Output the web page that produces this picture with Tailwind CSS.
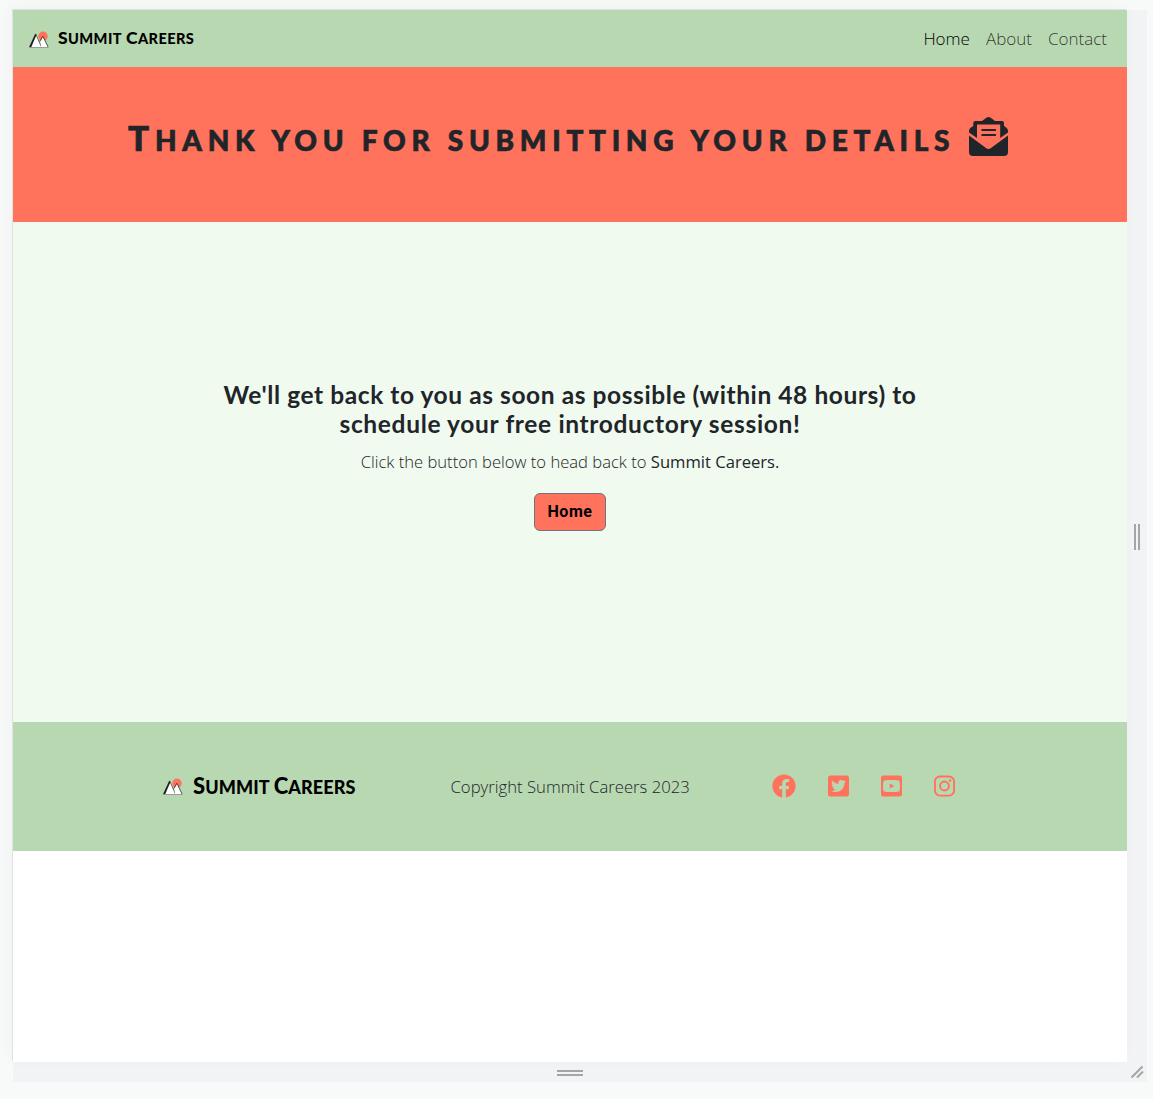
<!DOCTYPE html>
<html lang="en">
<head>
<meta charset="utf-8">
<title>Summit Careers</title>
<script src="https://cdn.jsdelivr.net/npm/@tailwindcss/browser@4"></script>
</head>
<body class="h-[1099px] overflow-hidden bg-[#f8faf9] pt-[10px] pl-[13px] font-['Open_Sans',sans-serif] text-[#212529]">
<svg class="hidden">
  <symbol id="logo" viewBox="0 0 20 18">
    <circle cx="14" cy="5.200" r="4.700" fill="#ff725c"/>
    <path d="M1.500 16 7 3.500 12.500 16z" fill="#fff"/>
    <path d="M0 16.200 6.300 2.500l1.200 1.600L2.200 16.200z" fill="#222"/>
    <path d="m6.700 3 5.500 12.500" stroke="#333" stroke-width=".7"/>
    <path d="m11.500 11 2.500-5 4.700 10h-6.500z" fill="#fff"/>
    <path d="m10.600 10.500 3.300-5.300 5.200 10.800" fill="none" stroke="#333" stroke-width=".8"/>
    <path d="M.5 16.500h19" stroke="#888" stroke-width=".7"/>
  </symbol>
</svg>
<div class="grid h-[1072px] w-[1134px] grid-cols-[1114px_20px] grid-rows-[1052px_20px] bg-[#f1f3f5]">
  <div class="bg-white shadow-[-1px_-1px_0_#dfe2e1,-4px_-4px_16px_rgba(0,0,0,0.03)]">
    <nav class="flex h-[57px] items-center justify-between bg-[#b8d8b2] pr-5 pl-4">
      <a class="flex items-center gap-[9px] text-black">
        <svg class="mt-[2px] h-[18px] w-[20px]"><use href="#logo"/></svg>
        <span class="-mt-px flex gap-[4px] font-['Lato',sans-serif] text-[14.6px] leading-6 font-black tracking-[0.4px] uppercase"><span class="block first-letter:text-[17.5px]">Summit</span><span class="block first-letter:text-[17.5px]">Careers</span></span>
      </a>
      <div class="flex gap-4 text-[17px] leading-6 font-light text-black/75">
        <a class="text-black">Home</a><a>About</a><a>Contact</a>
      </div>
    </nav>
    <header class="flex h-[155px] items-start justify-center bg-[#ff725c] pt-[48px]">
      <h1 class="flex w-[884px] items-start justify-between">
        <span class="-mt-[2px] block font-['Lato',sans-serif] text-[28px] leading-[48px] font-black tracking-[5.72px] whitespace-nowrap uppercase [-webkit-text-stroke:0.7px_#212529] first-letter:text-[35px]">Thank you for submitting your details</span>
        <svg class="mt-[2px] mr-[4px] h-[39px] w-[39px] shrink-0" viewBox="0 0 39 39" fill="#212529"><path d="M0 15.500V14q0-2 1.500-3.200L4.300 9V6q0-2 2-2H13l4-3q2.500-2 5 0l4 3h7q2 0 2 2v3l2.500 1.800Q39 12 39 14v1.500L31.200 21V7.500H8V21z"/><path d="M0 18.500 17 31q2.500 1.800 5 0l17-12.500V35q0 4-4 4H4q-4 0-4-4z"/><path d="M13.200 13h13M13.200 18h13" stroke="#212529" stroke-width="1.900" stroke-linecap="round"/></svg>
      </h1>
    </header>
    <main class="flex h-[500px] flex-col items-center bg-[#f0faef] pt-[158px] text-center">
      <h2 class="font-['Lato',sans-serif] text-[24.5px] leading-[29px] font-bold whitespace-nowrap"><span class="block tracking-[0.58px]">We'll get back to you as soon as possible (within 48 hours) to</span><span class="block tracking-[0.66px]">schedule your free introductory session!</span></h2>
      <p class="mt-[12px] text-[16.6px] leading-6 font-light">Click the button below to head back to <span class="font-normal">Summit Careers.</span></p>
      <a class="mt-[19px] flex h-[38px] w-[72px] items-center justify-center rounded-md border border-[#6c757d] bg-[#ff725c] font-['Roboto',sans-serif] text-[16px] font-bold tracking-[0.6px] text-black">Home</a>
    </main>
    <footer class="flex h-[129px] items-center bg-[#b8d8b2] pl-[150px]">
      <a class="flex w-[287px] items-center gap-[10px] text-black">
        <svg class="h-[18px] w-[20px]"><use href="#logo"/></svg>
        <span class="flex gap-[4px] font-['Lato',sans-serif] text-[18px] leading-6 font-black tracking-[0.1px] uppercase"><span class="block first-letter:text-[22px]">Summit</span><span class="block first-letter:text-[22px]">Careers</span></span>
      </a>
      <p class="w-[322px] pl-[0.5px] text-[16.7px] leading-6 font-light whitespace-nowrap">Copyright Summit Careers 2023</p>
      <div class="-mt-[2px] flex items-center gap-8 text-[#ff725c]">
        <svg class="size-6" viewBox="0 0 512 512" fill="currentColor"><path d="M504 256C504 119 393 8 256 8S8 119 8 256c0 123.78 90.69 226.38 209.25 245V327.69h-63V256h63v-54.64c0-62.15 37-96.48 93.67-96.48 27.14 0 55.52 4.84 55.52 4.84v61h-31.28c-30.8 0-40.41 19.12-40.41 38.73V256h68.78l-11 71.69h-57.78V501C413.31 482.38 504 379.78 504 256z"/></svg>
        <svg class="h-6 w-[21px]" viewBox="0 0 448 512" fill="currentColor"><path d="M400 32H48C21.5 32 0 53.5 0 80v352c0 26.5 21.5 48 48 48h352c26.5 0 48-21.5 48-48V80c0-26.5-21.5-48-48-48zm-48.9 158.8c.2 2.8.2 5.7.2 8.5 0 86.7-66 186.6-186.6 186.6-37.2 0-71.7-10.8-100.7-29.4 5.3.6 10.4.8 15.8.8 30.7 0 58.9-10.4 81.4-28-28.8-.6-53-19.5-61.3-45.5 10.1 1.5 19.2 1.5 29.6-1.2-30-6.1-52.5-32.5-52.5-64.4v-.8c8.7 4.9 18.9 7.9 29.6 8.3a65.447 65.447 0 0 1-29.2-54.6c0-12.2 3.2-23.4 8.9-33.1 32.3 39.8 80.8 65.8 135.2 68.6-9.3-44.5 24-80.6 64-80.6 18.9 0 35.9 7.9 47.9 20.7 14.8-2.8 29-8.3 41.6-15.8-4.9 15.2-15.2 28-28.8 36.1 13.2-1.4 26-5.1 37.8-10.2-8.9 13.1-20.1 24.7-32.9 34z"/></svg>
        <svg class="h-6 w-[21px]" viewBox="0 0 448 512" fill="currentColor"><path d="M186.8 202.1l95.2 54.1-95.2 54.1V202.1zM448 80v352c0 26.5-21.5 48-48 48H48c-26.5 0-48-21.5-48-48V80c0-26.5 21.5-48 48-48h352c26.5 0 48 21.5 48 48zm-42 176.3s0-59.6-7.6-88.2c-4.2-15.8-16.5-28.2-32.2-32.4C337.9 128 224 128 224 128s-113.9 0-142.2 7.7c-15.7 4.2-28 16.6-32.2 32.4-7.6 28.5-7.6 88.2-7.6 88.2s0 59.6 7.6 88.2c4.2 15.8 16.5 27.7 32.2 31.9C110.1 384 224 384 224 384s113.9 0 142.2-7.7c15.7-4.2 28-16.1 32.2-31.9 7.6-28.5 7.6-88.1 7.6-88.1z"/></svg>
        <svg class="h-6 w-[21px]" viewBox="0 0 448 512" fill="none" stroke="currentColor" stroke-width="40"><rect x="20" y="52" width="408" height="408" rx="110"/><circle cx="224" cy="256" r="95"/><circle cx="343" cy="137" r="27" fill="currentColor" stroke="none"/></svg>
      </div>
    </footer>
  </div>
  <div class="flex items-center justify-center gap-[2px] pt-[2px]"><i class="h-[26px] w-[2px] bg-[#a3a5a7]"></i><i class="h-[26px] w-[2px] bg-[#a3a5a7]"></i></div>
  <div class="flex flex-col items-center justify-center gap-[2px] pt-[2px]"><i class="h-[2px] w-[26px] bg-[#a3a5a7]"></i><i class="h-[2px] w-[26px] bg-[#a3a5a7]"></i></div>
  <svg class="h-5 w-5" viewBox="0 0 20 20" stroke="#a3a5a7" stroke-width="2"><path d="M4.500 15.500 15.500 4.500M10 15.500l6-6"/></svg>
</div>
</body>
</html>
